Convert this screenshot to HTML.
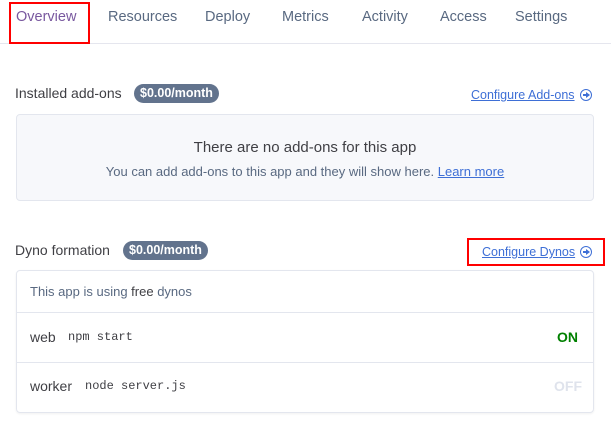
<!DOCTYPE html>
<html><head><style>
body{margin:0;width:611px;height:431px;background:#fff;font-family:"Liberation Sans",sans-serif;position:relative;overflow:hidden;color:#3f3f44}
.a{position:absolute;white-space:nowrap}
.tab{font-size:14.5px;color:#596981;top:9px}
.badge{background:#62738d;color:#fff;font-weight:bold;font-size:12.5px;border-radius:10px;padding:2px 6px;height:15px;line-height:15px}
.link{color:#3e6fd6;text-decoration:underline;font-size:12.5px}
.ic{display:inline-block;width:10px;height:10px;border:1.5px solid #3e6fd6;border-radius:50%;position:relative;vertical-align:-2px;margin-left:5px}
.ic:before{content:"";position:absolute;left:2px;top:4px;width:4px;height:2px;background:#3e6fd6}
.ic:after{content:"";position:absolute;left:5px;top:2px;border-left:4px solid #3e6fd6;border-top:3px solid transparent;border-bottom:3px solid transparent;}
.mono{font-family:"Liberation Mono",monospace;font-size:12px;color:#3f3f44}
</style></head><body>
<div class="a tab" style="left:16px;color:#79589f">Overview</div>
<div class="a tab" style="left:108px">Resources</div>
<div class="a tab" style="left:205px">Deploy</div>
<div class="a tab" style="left:282px">Metrics</div>
<div class="a tab" style="left:362px">Activity</div>
<div class="a tab" style="left:440px">Access</div>
<div class="a tab" style="left:515px">Settings</div>
<div class="a" style="left:0;top:43px;width:611px;height:1px;background:#e5e6ee"></div>
<div class="a" style="left:9px;top:2px;width:77px;height:38px;border:2.5px solid #f00"></div>

<div class="a" style="left:15px;top:85px;font-size:14px">Installed add-ons</div>
<div class="a badge" style="left:134px;top:84px">$0.00/month</div>
<div class="a link" style="left:471px;top:88px">Configure Add-ons<span class="ic"></span></div>
<div class="a" style="left:16px;top:114px;width:576px;height:85px;background:#f7f8fb;border:1px solid #e3e6ee;border-radius:4px"></div>
<div class="a" style="left:16px;top:139px;width:578px;text-align:center;font-size:15px;color:#3f3f44">There are no add-ons for this app</div>
<div class="a" style="left:16px;top:164px;width:578px;text-align:center;font-size:13px;color:#596981">You can add add-ons to this app and they will show here. <span style="color:#3e6fd6;text-decoration:underline">Learn more</span></div>

<div class="a" style="left:15px;top:242px;font-size:14px">Dyno formation</div>
<div class="a badge" style="left:123px;top:241px">$0.00/month</div>
<div class="a link" style="left:482px;top:245px">Configure Dynos<span class="ic"></span></div>
<div class="a" style="left:467px;top:238px;width:134px;height:24px;border:2.5px solid #f00"></div>

<div class="a" style="left:16px;top:270px;width:576px;height:141px;border:1px solid #e3e6ee;border-radius:4px;box-shadow:0 1px 2px rgba(0,0,0,.06)"></div>
<div class="a" style="left:17px;top:312px;width:576px;height:1px;background:#e3e6ee"></div>
<div class="a" style="left:17px;top:362px;width:576px;height:1px;background:#e3e6ee"></div>
<div class="a" style="left:30px;top:284px;font-size:13px;color:#596981">This app is using <b style="color:#3f3f44;font-weight:normal">free</b> dynos</div>
<div class="a" style="left:30px;top:329px;font-size:14px">web</div>
<div class="a mono" style="left:68px;top:330px">npm start</div>
<div class="a" style="left:557px;top:329px;font-size:14px;font-weight:bold;color:#008000">ON</div>
<div class="a" style="left:30px;top:378px;font-size:14px">worker</div>
<div class="a mono" style="left:85px;top:379px">node server.js</div>
<div class="a" style="left:554px;top:378px;font-size:14px;font-weight:bold;color:#dfe3ec">OFF</div>
</body></html>
